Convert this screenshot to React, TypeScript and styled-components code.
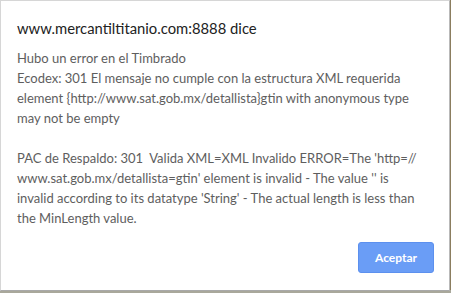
import React from "react";
import styled, { createGlobalStyle } from "styled-components";

const GlobalStyle = createGlobalStyle`
  html, body {
    margin: 0;
    padding: 0;
    background: #8b7d5f;
    overflow: hidden;
  }
  body {
    font-family: "Lato", "Noto Sans", sans-serif;
  }
`;

const Page = styled.div`
  width: 451px;
  height: 293px;
  box-sizing: border-box;
  background: linear-gradient(to bottom, #8b7d5f 0, #8b7d5f 290px, #a9a89b 290px);
`;

const Dialog = styled.div`
  width: 450px;
  height: 291px;
  box-sizing: border-box;
  background: #ffffff;
  border: 1px solid #d6d6d6;
  border-right-color: #b9b9b9;
  border-bottom-color: #a9a9a9;
  padding: 17px 15px 17px 16px;
  display: flex;
  flex-direction: column;
`;

const Title = styled.div`
  font-size: 14.8px;
  line-height: 20px;
  color: #222222;
  white-space: pre;
`;

const Message = styled.div`
  margin-top: 10px;
  font-size: 13px;
  line-height: 20px;
  color: #5e5e5e;
  white-space: pre;
`;

const Buttons = styled.div`
  margin-top: auto;
  display: flex;
  justify-content: flex-end;
`;

const Button = styled.button`
  width: 76px;
  height: 31px;
  box-sizing: border-box;
  border: 1px solid #5c90ee;
  border-radius: 3px;
  background: #6a9df6;
  color: #ffffff;
  font-family: "Lato", "Noto Sans", sans-serif;
  font-weight: 700;
  font-size: 12px;
  padding: 0;
  cursor: pointer;
`;

const lines = [
  "Hubo un error en el Timbrado",
  "Ecodex: 301 El mensaje no cumple con la estructura XML requerida",
  "element {http://www.sat.gob.mx/detallista}gtin with anonymous type",
  "may not be empty",
  "",
  "PAC de Respaldo: 301  Valida XML=XML Invalido ERROR=The 'http=//",
  "www.sat.gob.mx/detallista=gtin' element is invalid - The value '' is",
  "invalid according to its datatype 'String' - The actual length is less than",
  "the MinLength value.",
];

export default function App() {
  return (
    <>
      <GlobalStyle />
      <Page>
        <Dialog role="alertdialog">
          <Title>www.mercantiltitanio.com:8888 dice</Title>
          <Message>{lines.join("\n")}</Message>
          <Buttons>
            <Button>Aceptar</Button>
          </Buttons>
        </Dialog>
      </Page>
    </>
  );
}
